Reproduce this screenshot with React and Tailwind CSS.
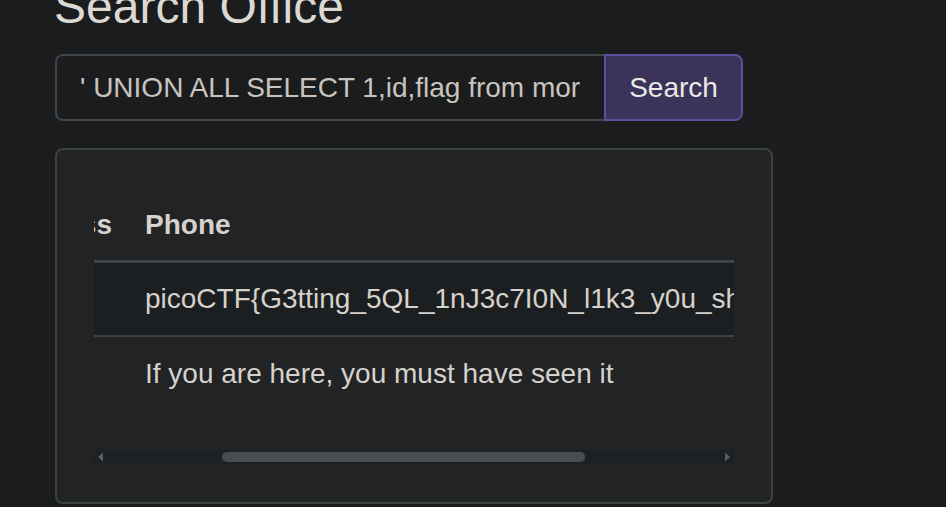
export default function App() {
  return (
    <div className="min-h-[507px] bg-[#1b1c1e] text-[#d6d1cb] overflow-hidden" style={{ fontFamily: '"Liberation Sans", Arial, sans-serif' }}>
      <div className="pl-[55px] w-[773px] box-content">
        <h1 className="-mt-[22px] text-[48px] leading-[1.2] font-normal text-[#dcd8d2] -ml-px">Search Office</h1>

        <div className="mt-[18px] flex h-[67px] w-[688px]">
          <input
            readOnly
            value="' UNION ALL SELECT 1,id,flag from mor"
            className="flex-1 min-w-0 h-full bg-[#1b1c1e] border-2 border-r-0 border-[#3f4448] rounded-l-[8px] pl-[23px] pr-[20px] pt-[2px] text-[28px] text-[#c9c4bd] outline-none"
            style={{ fontFamily: '"Liberation Sans", Arial, sans-serif' }}
          />
          <button className="w-[139px] h-full bg-[#3b3359] border-2 border-[#5c4f9c] rounded-r-[8px] pt-[2px] text-[28px] text-[#ebe9e6]">
            Search
          </button>
        </div>

        <div className="mt-[27px] w-[718px] h-[356px] bg-[#212325] border-2 border-[#3b4043] rounded-[8px] px-[37px] pt-[41px]">
          <div className="w-[640px] overflow-hidden">
            <div className="flex h-[72px] items-center border-b-[3px] border-[#404548]">
              <div className="w-[34px] h-full flex justify-end items-center overflow-hidden pr-[16px]">
                <span className="shrink-0 font-bold text-[28px] whitespace-nowrap">Address</span>
              </div>
              <div className="pl-[17px] font-bold text-[28px] whitespace-nowrap">Phone</div>
            </div>
            <div className="flex h-[74px] items-center bg-[#1c1f21] border-b-2 border-[#3c4144]">
              <div className="w-[34px] shrink-0"></div>
              <div className="pl-[17px] text-[28px] whitespace-nowrap">picoCTF{"{"}G3tting_5QL_1nJ3c7I0N_l1k3_y0u_sh0uld_c0d3}</div>
            </div>
            <div className="flex h-[74px] items-center">
              <div className="w-[34px] shrink-0"></div>
              <div className="pl-[17px] text-[28px] whitespace-nowrap">If you are here, you must have seen it</div>
            </div>
            <div className="mt-[39px] h-[14px] bg-[#1e2123] flex items-center">
              <svg width="14" height="14" viewBox="0 0 14 14" className="shrink-0">
                <path d="M4 7 L9 2.5 L9 11.5 Z" fill="#596065" />
              </svg>
              <div className="ml-[114px] w-[363px] h-[10px] rounded-full bg-[#484d52]"></div>
              <div className="flex-1"></div>
              <svg width="14" height="14" viewBox="0 0 14 14" className="shrink-0">
                <path d="M10 7 L5 2.5 L5 11.5 Z" fill="#596065" />
              </svg>
            </div>
          </div>
        </div>
      </div>
    </div>
  );
}
